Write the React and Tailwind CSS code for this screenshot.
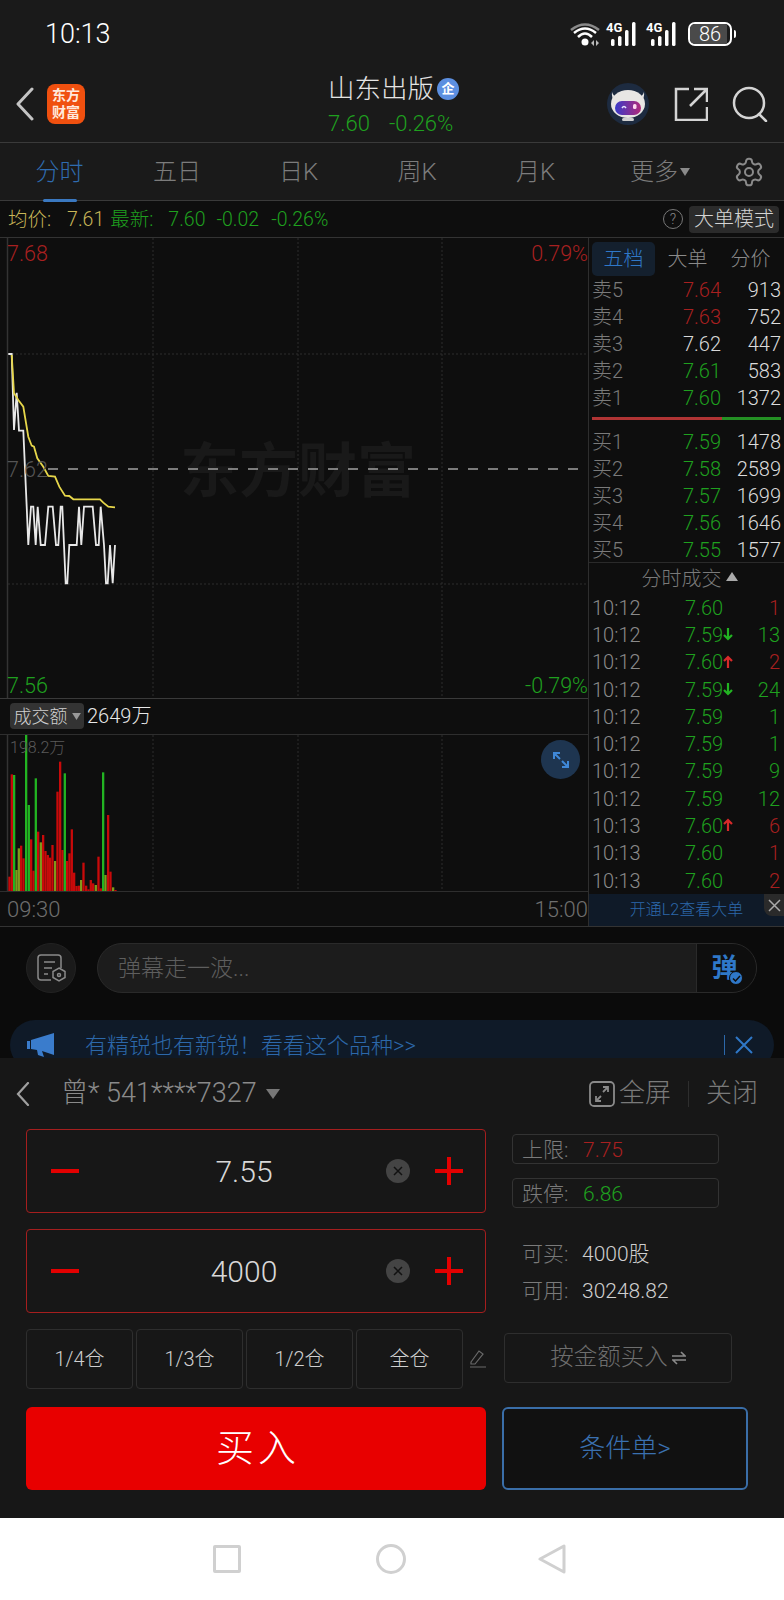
const white = [[25,342],[35,342],[42,570],[50,458],[57,572],[70,572],[80,800],[85,915],[93,800],[100,800],[107,915],[113,800],[122,915],[135,915],[145,800],[158,800],[168,915],[175,915],[182,800],[187,800],[197,1030],[202,1030],[208,915],[230,915],[237,800],[244,915],[252,800],[278,800],[288,915],[296,915],[302,800],[312,915],[318,1030],[323,1030],[330,915],[338,1030],[345,915]];
const yellow = [[35,345],[42,460],[55,480],[70,500],[85,590],[95,617],[102,620],[112,655],[130,680],[145,708],[165,710],[178,740],[195,767],[208,768],[220,778],[300,778],[310,788],[325,800],[345,802]];

const R = '#c80a0a';
const G = '#22b422';
const O = '#7f9a1c';
const bars = [[28,590,R],[35,283,R],[42,285,G],[49,570,O],[56,505,O],[63,497,R],[70,535,R],[78,165,G],[86,375,G],[93,478,R],[100,572,R],[107,295,G],[114,455,R],[122,487,O],[129,465,R],[136,513,R],[143,525,R],[150,533,R],[157,495,R],[165,543,O],[172,335,R],[180,245,R],[187,510,R],[194,280,G],[201,543,R],[208,520,R],[215,448,R],[222,578,R],[229,618,R],[236,617,R],[243,600,O],[250,548,R],[258,617,R],[265,628,R],[272,600,R],[279,610,R],[287,615,O],[295,530,R],[302,625,R],[309,277,G],[316,585,O],[324,405,R],[331,575,R],[339,622,O],[346,630,R]];

const sells = [
  ['卖5', '7.64', 'text-[#a82020]', '913'],
  ['卖4', '7.63', 'text-[#a82020]', '752'],
  ['卖3', '7.62', 'text-[#d8d8d8]', '447'],
  ['卖2', '7.61', 'text-[#1fa01f]', '583'],
  ['卖1', '7.60', 'text-[#1fa01f]', '1372'],
];
const buys = [
  ['买1', '7.59', 'text-[#1fa01f]', '1478'],
  ['买2', '7.58', 'text-[#1fa01f]', '2589'],
  ['买3', '7.57', 'text-[#1fa01f]', '1699'],
  ['买4', '7.56', 'text-[#1fa01f]', '1646'],
  ['买5', '7.55', 'text-[#1fa01f]', '1577'],
];
const ticks = [
  ['10:12', '7.60', '', '1', 'text-[#a82020]'],
  ['10:12', '7.59', 'down', '13', 'text-[#1fa01f]'],
  ['10:12', '7.60', 'up', '2', 'text-[#a82020]'],
  ['10:12', '7.59', 'down', '24', 'text-[#1fa01f]'],
  ['10:12', '7.59', '', '1', 'text-[#1fa01f]'],
  ['10:12', '7.59', '', '1', 'text-[#1fa01f]'],
  ['10:12', '7.59', '', '9', 'text-[#1fa01f]'],
  ['10:12', '7.59', '', '12', 'text-[#1fa01f]'],
  ['10:13', '7.60', 'up', '6', 'text-[#a82020]'],
  ['10:13', '7.60', '', '1', 'text-[#a82020]'],
  ['10:13', '7.60', '', '2', 'text-[#a82020]'],
];

function toLine(points) {
  return points.map(([x, y]) => `${(x / 3).toFixed(1)},${(y / 3).toFixed(1)}`).join(' ');
}

function Signal() {
  return (
    <div className="relative h-[24px] w-[36px]">
      <span className="absolute left-0 top-[-1px] text-[13px] font-bold leading-[14px] text-white">4G</span>
      <svg className="absolute left-0 top-0" width="36" height="24" viewBox="0 0 36 24" fill="#fff">
        <rect x="5" y="17" width="3.5" height="7" rx="1.5" />
        <rect x="12" y="14" width="3.5" height="10" rx="1.5" />
        <rect x="19" y="8" width="3.5" height="16" rx="1.5" />
        <rect x="26" y="0" width="3.5" height="24" rx="1.5" />
      </svg>
    </div>
  );
}

function StatusBar() {
  return (
    <div className="flex h-[70px] items-center pb-[3px] pl-[45px] pr-[48px]">
      <span className="mt-[2px] text-[27px] text-white">10:13</span>
      <div className="ml-auto flex items-center">
        <svg width="32" height="24" viewBox="0 0 32 24" fill="none">
          <path d="M1 8 Q15 -3 29 8" stroke="#8a8a8a" strokeWidth="2.5" />
          <path d="M4 11 Q15 2 26 11" stroke="#fff" strokeWidth="2.5" />
          <path d="M8 15 Q15 8 22 15" stroke="#fff" strokeWidth="2.5" />
          <circle cx="15" cy="20" r="3.5" fill="#fff" />
          <path d="M21 21l3-3v6zM29 21l-3-3v6z" fill="#bbb" />
        </svg>
        <div className="ml-[4px]"><Signal /></div>
        <div className="ml-[4px]"><Signal /></div>
        <div className="relative ml-[6px] flex h-[24px] w-[44px] items-center justify-center overflow-hidden rounded-[7px] border-2 border-white">
          <div className="absolute inset-y-0 left-0 w-[37px] bg-[#4a4a4a]" />
          <span className="relative text-[20px] leading-none text-white">86</span>
        </div>
        <div className="ml-[2px] h-[8px] w-[2px] rounded-r bg-white" />
      </div>
    </div>
  );
}

function Header() {
  return (
    <div className="relative flex h-[73px] items-center border-b border-[#3a3a3a] pl-[15px] pr-[16px]">
      <svg width="20" height="34" viewBox="0 0 20 34" fill="none" className="mt-[-4px]">
        <path d="M17 2 L3 17 L17 32" stroke="#c4c4c4" strokeWidth="3" strokeLinecap="round" strokeLinejoin="round" />
      </svg>
      <div className="ml-[12px] mt-[-4px] flex h-[40px] w-[38px] flex-col items-center justify-center rounded-[8px] bg-[#f0500f] text-[14px] font-bold leading-[17px] text-[#ffe9dc]">
        <span>东方</span>
        <span>财富</span>
      </div>
      <div className="absolute left-[328px] top-[1px] flex flex-col">
        <div className="flex items-center">
          <span className="text-[26.5px] leading-[36px] text-[#e4e4e4]">山东出版</span>
          <span className="ml-[3px] flex h-[22px] w-[22px] items-center justify-center rounded-full bg-[#5c8fe0] text-[13px] font-bold text-white">企</span>
        </div>
        <div className="mt-[2px] flex text-[22px] leading-[30px] text-[#1fa01f]">
          <span>7.60</span>
          <span className="ml-[19px]">-0.26%</span>
        </div>
      </div>
      <div className="ml-auto mt-[-4px] flex items-center">
        <svg width="42" height="42" viewBox="0 0 42 42">
          <defs>
            <linearGradient id="visor" x1="0" x2="1" y1="0" y2="0">
              <stop offset="0" stopColor="#3a3ac8" />
              <stop offset="1" stopColor="#b02a7a" />
            </linearGradient>
          </defs>
          <circle cx="21" cy="21" r="21" fill="#1d2b40" />
          <path d="M5 9 Q7 15 12 14 L9 20 Q4 16 5 9Z M37 9 Q35 15 30 14 L33 20 Q38 16 37 9Z" fill="#e3e3e3" />
          <ellipse cx="21" cy="21" rx="17" ry="14" fill="#e8e6e4" />
          <rect x="8" y="18" width="26" height="14" rx="7" fill="url(#visor)" />
          <path d="M15 25 q2-3 4 0" stroke="#e6e6ff" strokeWidth="1.5" fill="none" />
          <rect x="26" y="21" width="3.5" height="5" rx="1.5" fill="#ffd8ee" />
          <rect x="15" y="35" width="12" height="3" rx="1.5" fill="#cfcfcf" />
        </svg>
        <svg width="34" height="34" viewBox="0 0 34 34" fill="none" className="ml-[25px]" stroke="#d4d4d4" strokeWidth="2.5">
          <path d="M15 2 H2 V33 H33 V20" />
          <path d="M16 19 L32 3 M20 2 H33 V15" />
        </svg>
        <svg width="36" height="36" viewBox="0 0 36 36" fill="none" className="ml-[24px]" stroke="#d4d4d4" strokeWidth="2.5">
          <circle cx="17" cy="17" r="15" />
          <path d="M27 28 L34 35" strokeLinecap="round" />
        </svg>
      </div>
    </div>
  );
}

function Tabs() {
  return (
    <div className="relative flex h-[58px] items-center border-b border-[#3a3a3a] pt-[1px] text-[24px] text-[#7c7c7c]">
      <div className="flex w-[118px] justify-center pl-[1px] text-[#2f6cb0]">
        <div className="relative">
          分时
          <div className="absolute bottom-[-12px] left-[7px] h-[3px] w-[34px] rounded bg-[#3a78c0]" />
        </div>
      </div>
      <div className="flex w-[118px] justify-center">五日</div>
      <div className="flex w-[125px] justify-center">日K</div>
      <div className="flex w-[112px] justify-center">周K</div>
      <div className="flex w-[125px] justify-center">月K</div>
      <div className="ml-[32px] flex items-center">
        更多
        <svg width="10" height="8" viewBox="0 0 10 8" className="ml-[2px]" fill="#8a8a8a"><path d="M0 0h10L5 8z" /></svg>
      </div>
      <svg width="32" height="32" viewBox="0 0 24 24" fill="none" stroke="#8a8a8a" strokeWidth="1.5" className="ml-[43px]">
        <path d="M12.22 2h-.44a2 2 0 0 0-2 2v.18a2 2 0 0 1-1 1.73l-.43.25a2 2 0 0 1-2 0l-.15-.08a2 2 0 0 0-2.73.73l-.22.38a2 2 0 0 0 .73 2.73l.15.1a2 2 0 0 1 1 1.72v.51a2 2 0 0 1-1 1.74l-.15.09a2 2 0 0 0-.73 2.73l.22.38a2 2 0 0 0 2.73.73l.15-.08a2 2 0 0 1 2 0l.43.25a2 2 0 0 1 1 1.73V20a2 2 0 0 0 2 2h.44a2 2 0 0 0 2-2v-.18a2 2 0 0 1 1-1.73l.43-.25a2 2 0 0 1 2 0l.15.08a2 2 0 0 0 2.73-.73l.22-.39a2 2 0 0 0-.73-2.73l-.15-.08a2 2 0 0 1-1-1.74v-.5a2 2 0 0 1 1-1.74l.15-.09a2 2 0 0 0 .73-2.73l-.22-.38a2 2 0 0 0-2.73-.73l-.15.08a2 2 0 0 1-2 0l-.43-.25a2 2 0 0 1-1-1.73V4a2 2 0 0 0-2-2z" />
        <circle cx="12" cy="12" r="3" />
      </svg>
    </div>
  );
}

function InfoBar() {
  return (
    <div className="flex h-[37px] items-center border-b border-[#333] bg-[#0e0e0e] pl-[8px] pr-[5px] text-[19.5px] text-[#1fa01f]">
      <span className="pt-[2px] text-[#c9b658]">均价:</span>
      <span className="ml-[16px] pt-[2px] text-[#c9b658]">7.61</span>
      <span className="ml-[6px] pt-[2px]">最新:</span>
      <span className="ml-[15px] pt-[2px]">7.60</span>
      <span className="ml-[11px] pt-[2px]">-0.02</span>
      <span className="ml-[12px] pt-[2px]">-0.26%</span>
      <span className="ml-auto flex h-[20px] w-[20px] items-center justify-center rounded-full border border-[#777] text-[14px] text-[#888]">?</span>
      <span className="ml-[6px] flex h-[27px] w-[90px] items-center justify-center rounded-[4px] bg-[#2b2b2b] text-[20px] text-[#d4d4d4]">大单模式</span>
    </div>
  );
}

function MainChart() {
  return (
    <div className="relative h-[461px] overflow-hidden border-b border-[#3a3a3a]">
      <div className="flex h-full items-center justify-center">
        <span className="ml-[8px] mt-[9px] text-[59px] font-bold text-[#191919]">东方财富</span>
      </div>
      <svg className="absolute left-0 top-0" width="588" height="461" fill="none">
        <path d="M7.5 0V461" stroke="#333" strokeWidth="1.5" />
        <path d="M153 0V461M298 0V461M442 0V461" stroke="#2c2c2c" strokeDasharray="2 2" />
        <path d="M8 116H588M8 346H588" stroke="#2c2c2c" strokeDasharray="2 2" />
        <path d="M48 231H580" stroke="#a0a0a0" strokeWidth="1.5" strokeDasharray="10 10" />
        <g transform="translate(0 2)">
          <polyline points={toLine(white)} stroke="#e8e8e8" strokeWidth="1.8" />
          <polyline points={toLine(yellow)} stroke="#e6d64a" strokeWidth="1.8" />
        </g>
      </svg>
      <span className="absolute left-[7px] top-[2px] text-[21.5px] leading-[28px] text-[#a82020]">7.68</span>
      <span className="absolute right-0 top-[2px] text-[21.5px] leading-[28px] text-[#a82020]">0.79%</span>
      <span className="absolute left-[7px] top-[218px] text-[21.5px] leading-[28px] text-[#555]">7.62</span>
      <span className="absolute bottom-[-2px] left-[7px] text-[21.5px] leading-[28px] text-[#1fa01f]">7.56</span>
      <span className="absolute bottom-[-2px] right-0 text-[21.5px] leading-[28px] text-[#1fa01f]">-0.79%</span>
    </div>
  );
}

function VolumeChart() {
  return (
    <div className="relative h-[158px] border-y border-[#2e2e2e]">
      <svg className="absolute left-0 top-0" width="588" height="156" fill="none">
        <path d="M7.5 0V156" stroke="#333" strokeWidth="1.5" />
        <path d="M153 0V156M298 0V156M442 0V156" stroke="#2c2c2c" strokeDasharray="2 2" />
        {bars.map(([x, y, c]) => (
          <rect key={x} x={x / 3 - 1} y={y / 3 - 55} width="2.3" height={(635 - y) / 3} fill={c} />
        ))}
      </svg>
      <span className="absolute left-[10px] top-[1px] text-[16px] leading-[24px] text-[#5a5a5a]">198.2万</span>
      <div className="absolute right-[8px] top-[5px] flex h-[39px] w-[39px] items-center justify-center rounded-full bg-[#1e3550]">
        <svg width="22" height="22" viewBox="0 0 22 22" fill="none" stroke="#3f88d8" strokeWidth="2">
          <path d="M4 10V4H10M4 4L10 10M18 12V18H12M18 18L12 12" />
        </svg>
      </div>
    </div>
  );
}

function LeftPanel() {
  return (
    <div className="w-[588px] shrink-0">
      <MainChart />
      <div className="flex h-[35px] items-center pb-[1px] pl-[10px]">
        <span className="flex h-[26px] w-[74px] items-center justify-center rounded-[4px] bg-[#333] text-[18px] text-[#d0d0d0]">
          成交额
          <svg width="9" height="7" viewBox="0 0 10 8" className="ml-[4px]" fill="#999"><path d="M0 0h10L5 8z" /></svg>
        </span>
        <span className="ml-[3px] text-[20px] text-[#e8e8e8]">2649万</span>
      </div>
      <VolumeChart />
      <div className="flex h-[34px] items-center justify-between pl-[7px] text-[22px] text-[#6e6e6e]">
        <span>09:30</span>
        <span>15:00</span>
      </div>
    </div>
  );
}

function BookRow({ row }) {
  return (
    <div className="flex h-[27px] items-center pl-[3px] pr-[3px] text-[20px]">
      <span className="w-[40px] text-[#7a7a7a]">{row[0]}</span>
      <span className={`w-[89px] text-right ${row[2]}`}>{row[1]}</span>
      <span className="flex-1 text-right text-[#dcdcdc]">{row[3]}</span>
    </div>
  );
}

function Arrow({ dir }) {
  if (!dir) return null;
  const color = dir === 'up' ? '#d82a2a' : '#22b422';
  const d = dir === 'up' ? 'M5 13V2M1 6l4-4 4 4' : 'M5 1v11M1 8l4 4 4-4';
  return (
    <svg width="10" height="14" viewBox="0 0 10 14" fill="none" stroke={color} strokeWidth="2.2" className="absolute left-[134px] top-[6px]">
      <path d={d} />
    </svg>
  );
}

function RightPanel() {
  return (
    <div className="flex w-[196px] flex-col border-l border-[#2e2e2e]">
      <div className="flex h-[38px] items-start pl-[3px] pt-[4px] text-[20px] text-[#8a8a8a]">
        <span className="flex h-[34px] w-[63px] items-center justify-center rounded-[5px] bg-[#14202e] text-[#2f78c8]">五档</span>
        <span className="ml-[1px] flex h-[34px] w-[63px] items-center justify-center">大单</span>
        <span className="flex h-[34px] w-[63px] items-center justify-center">分价</span>
      </div>
      {sells.map((row) => <BookRow key={row[0]} row={row} />)}
      <div className="ml-[3px] mr-[3px] mt-[6px] flex h-[3px]">
        <div className="w-[130px] bg-[#b03434]" />
        <div className="flex-1 bg-[#249024]" />
      </div>
      <div className="h-[8px]" />
      {buys.map((row) => <BookRow key={row[0]} row={row} />)}
      <div className="mt-[-1px] flex h-[32px] items-center justify-center border-t border-[#2a2a2a] pl-[6px] text-[20px] text-[#7a7a7a]">
        分时成交
        <svg width="12" height="9" viewBox="0 0 12 9" className="ml-[4px] mt-[-5px]" fill="#aaa"><path d="M6 0l6 9H0z" /></svg>
      </div>
      {ticks.map((t, i) => (
        <div key={i} className="relative flex h-[27.3px] items-center pl-[3px] pr-[4px] text-[20px]">
          <span className="w-[93px] text-[#8a8a8a]">{t[0]}</span>
          <span className="text-[#1fa01f]">{t[1]}</span>
          <Arrow dir={t[2]} />
          <span className={`ml-auto ${t[4]}`}>{t[3]}</span>
        </div>
      ))}
      <div className="relative flex flex-1 items-center justify-center bg-[#0f1a28] text-[16px] text-[#2c68aa]">
        开通L2查看大单
        <div className="absolute right-0 top-0 flex h-[22px] w-[20px] items-center justify-center rounded-bl-[8px] bg-[#2a2a2a]">
          <svg width="13" height="13" viewBox="0 0 13 13" stroke="#aaa" strokeWidth="1.5"><path d="M1 1l11 11M12 1L1 12" /></svg>
        </div>
      </div>
    </div>
  );
}

function Social() {
  return (
    <div className="h-[132px] overflow-hidden border-t border-[#333] bg-[#0b0b0b]">
      <div className="mt-[16px] flex h-[50px] items-center pl-[26px] pr-[27px]">
        <div className="flex h-[50px] w-[50px] items-center justify-center rounded-full border border-[#222] bg-[#1a1a1a]">
          <svg width="30" height="30" viewBox="0 0 30 30" fill="none" stroke="#8a8a8a" strokeWidth="1.5">
            <path d="M15 27H5a3 3 0 0 1-3-3V5a3 3 0 0 1 3-3h17a3 3 0 0 1 3 3v10" />
            <path d="M8 9h11M8 15h8M8 21h4" />
            <path d="M23 15l6 3.5v6L23 28l-6-3.5v-6z" />
            <circle cx="23" cy="22" r="1.5" />
          </svg>
        </div>
        <div className="ml-[21px] flex h-[50px] flex-1 items-center overflow-hidden rounded-full border border-[#2a2a2a] bg-[#1c1c1c]">
          <span className="flex-1 pl-[20px] pt-[3px] text-[23px] text-[#5e5e5e]">弹幕走一波...</span>
          <span className="relative flex h-full w-[60px] items-center justify-center border-l border-[#2a2a2a] bg-[#0e0e0e] pr-[4px] text-[26px] font-bold text-[#2f78c8]">
            弹
            <span className="absolute bottom-[7px] left-[32px] flex h-[14px] w-[14px] items-center justify-center rounded-full border border-[#0e0e0e] bg-[#2f78c8]">
              <svg width="9" height="9" viewBox="0 0 9 9" fill="none" stroke="#0e0e0e" strokeWidth="1.5"><path d="M1 4.5l2.5 2.5L8 2" /></svg>
            </span>
          </span>
        </div>
      </div>
      <div className="ml-[10px] mr-[10px] mt-[27px] flex h-[50px] items-center rounded-[25px] bg-[#0f1a28] pl-[17px] pr-[21px]">
        <svg width="27" height="24" viewBox="0 0 27 24" fill="#3a7ccc">
          <path d="M0 8h3v8H0zM4 7l23-7v22L15 18l2 6-6-2-1-5-6-1z" />
        </svg>
        <span className="ml-[31px] text-[22px] text-[#2c68aa]">有精锐也有新锐！看看这个品种&gt;&gt;</span>
        <div className="ml-auto h-[20px] w-[1px] bg-[#2c68aa]" />
        <svg width="18" height="18" viewBox="0 0 18 18" className="ml-[10px]" stroke="#2f78c8" strokeWidth="2"><path d="M1 1l16 16M17 1L1 17" /></svg>
      </div>
    </div>
  );
}

function StepInput({ value }) {
  return (
    <div className="flex h-[84px] w-[460px] items-center rounded-[4px] border border-[#a51e1e] pl-[24px] pr-[22px]">
      <div className="h-[4px] w-[28px] bg-[#e30000]" />
      <span className="flex-1 pl-[23px] text-center text-[30px] text-[#d8d8d8]">{value}</span>
      <div className="flex h-[24px] w-[24px] items-center justify-center rounded-full bg-[#444]">
        <svg width="10" height="10" viewBox="0 0 10 10" stroke="#111" strokeWidth="1.5"><path d="M1 1l8 8M9 1L1 9" /></svg>
      </div>
      <div className="relative ml-[25px] h-[28px] w-[28px]">
        <div className="absolute left-0 top-[12px] h-[4px] w-[28px] bg-[#e30000]" />
        <div className="absolute left-[12px] top-0 h-[28px] w-[4px] bg-[#e30000]" />
      </div>
    </div>
  );
}

function TradePanel() {
  return (
    <div className="h-[460px] bg-[#171717]">
      <div className="flex h-[71px] items-center pl-[16px] pr-[26px]">
        <svg width="14" height="24" viewBox="0 0 14 24" fill="none" stroke="#a0a0a0" strokeWidth="2.2"><path d="M12 1L2 12l10 11" strokeLinecap="round" /></svg>
        <span className="ml-[31px] text-[27px] text-[#8a8a8a]">曾* 541****7327</span>
        <svg width="14" height="10" viewBox="0 0 14 10" className="ml-[9px]" fill="#777"><path d="M0 0h14L7 10z" /></svg>
        <svg width="26" height="26" viewBox="0 0 26 26" fill="none" stroke="#8a8a8a" strokeWidth="1.8" className="ml-auto">
          <rect x="1" y="1" width="24" height="24" rx="4" />
          <path d="M7 15v5h5M7 20l5-5M19 11V6h-5M19 6l-5 5" />
        </svg>
        <span className="ml-[4px] text-[26px] text-[#7a7a7a]">全屏</span>
        <div className="ml-[17px] h-[26px] w-[1px] bg-[#2e2e2e]" />
        <span className="ml-[17px] text-[26px] text-[#7a7a7a]">关闭</span>
      </div>
      <div className="flex pl-[26px]">
        <div className="flex flex-col gap-[16px]">
          <StepInput value="7.55" />
          <StepInput value="4000" />
        </div>
        <div className="ml-[26px] w-[207px] text-[21px] text-[#7a7a7a]">
          <div className="mt-[5px] flex h-[30px] items-center rounded-[4px] border border-[#333] pl-[9px] pt-[3px]">
            <span className="w-[61px]">上限:</span><span className="text-[#a82020]">7.75</span>
          </div>
          <div className="mt-[14px] flex h-[30px] items-center rounded-[4px] border border-[#333] pl-[9px] pt-[3px]">
            <span className="w-[61px]">跌停:</span><span className="text-[#1fa01f]">6.86</span>
          </div>
          <div className="mt-[28px] flex h-[37px] items-center pl-[10px]">
            <span className="w-[60px]">可买:</span><span className="text-[#cfcfcf]">4000股</span>
          </div>
          <div className="flex h-[37px] items-center pl-[10px]">
            <span className="w-[60px]">可用:</span><span className="text-[#cfcfcf]">30248.82</span>
          </div>
        </div>
      </div>
      <div className="mt-[16px] flex items-center pl-[26px]">
        {['1/4仓', '1/3仓', '1/2仓', '全仓'].map((label) => (
          <div key={label} className="mr-[3px] flex h-[60px] w-[107px] items-center justify-center rounded-[4px] border border-[#2e2e2e] text-[20px] text-[#cfcfcf]">{label}</div>
        ))}
        <svg width="18" height="18" viewBox="0 0 18 18" fill="none" stroke="#6a6a6a" strokeWidth="1.2" className="ml-[3px]">
          <path d="M2 12L10 1l4 3-8 10H2zM1 17h16" />
        </svg>
        <div className="ml-[17px] mt-[-3px] flex h-[50px] w-[228px] items-center justify-center rounded-[4px] border border-[#2e2e2e] text-[23.5px] text-[#6e6e6e]">
          按金额买入
          <svg width="14" height="14" viewBox="0 0 14 14" fill="none" stroke="#8a8a8a" strokeWidth="1.6" className="ml-[4px]"><path d="M0 5h13L9 1M14 9H1l4 4" /></svg>
        </div>
      </div>
      <div className="mt-[18px] flex pl-[26px]">
        <div className="flex h-[83px] w-[460px] items-center justify-center gap-[4px] rounded-[6px] bg-[#e80000] text-[38px] text-white">
          <span>买</span><span>入</span>
        </div>
        <div className="ml-[16px] flex h-[83px] w-[246px] items-center justify-center rounded-[6px] border-2 border-[#3a6ea8] bg-[#111] text-[26px] text-[#3a70b0]">条件单&gt;</div>
      </div>
    </div>
  );
}

function NavBar() {
  return (
    <div className="flex h-[82px] items-center bg-white pl-[213px]">
      <div className="h-[28px] w-[28px] rounded-[2px] border-[3px] border-[#d0d0d0]" />
      <div className="ml-[135px] h-[30px] w-[30px] rounded-full border-[3px] border-[#d0d0d0]" />
      <svg width="28" height="30" viewBox="0 0 28 30" fill="none" stroke="#d0d0d0" strokeWidth="3" strokeLinejoin="round" className="ml-[132px]">
        <path d="M26 2V28L2 15Z" />
      </svg>
    </div>
  );
}

export default function App() {
  return (
    <div className="flex h-[1600px] w-[784px] flex-col overflow-hidden bg-[#1a1a1a] font-['Roboto','Noto_Sans_CJK_SC',sans-serif] font-light">
      <StatusBar />
      <Header />
      <Tabs />
      <InfoBar />
      <div className="flex h-[688px] bg-[#0e0e0e]">
        <LeftPanel />
        <RightPanel />
      </div>
      <Social />
      <TradePanel />
      <NavBar />
    </div>
  );
}
